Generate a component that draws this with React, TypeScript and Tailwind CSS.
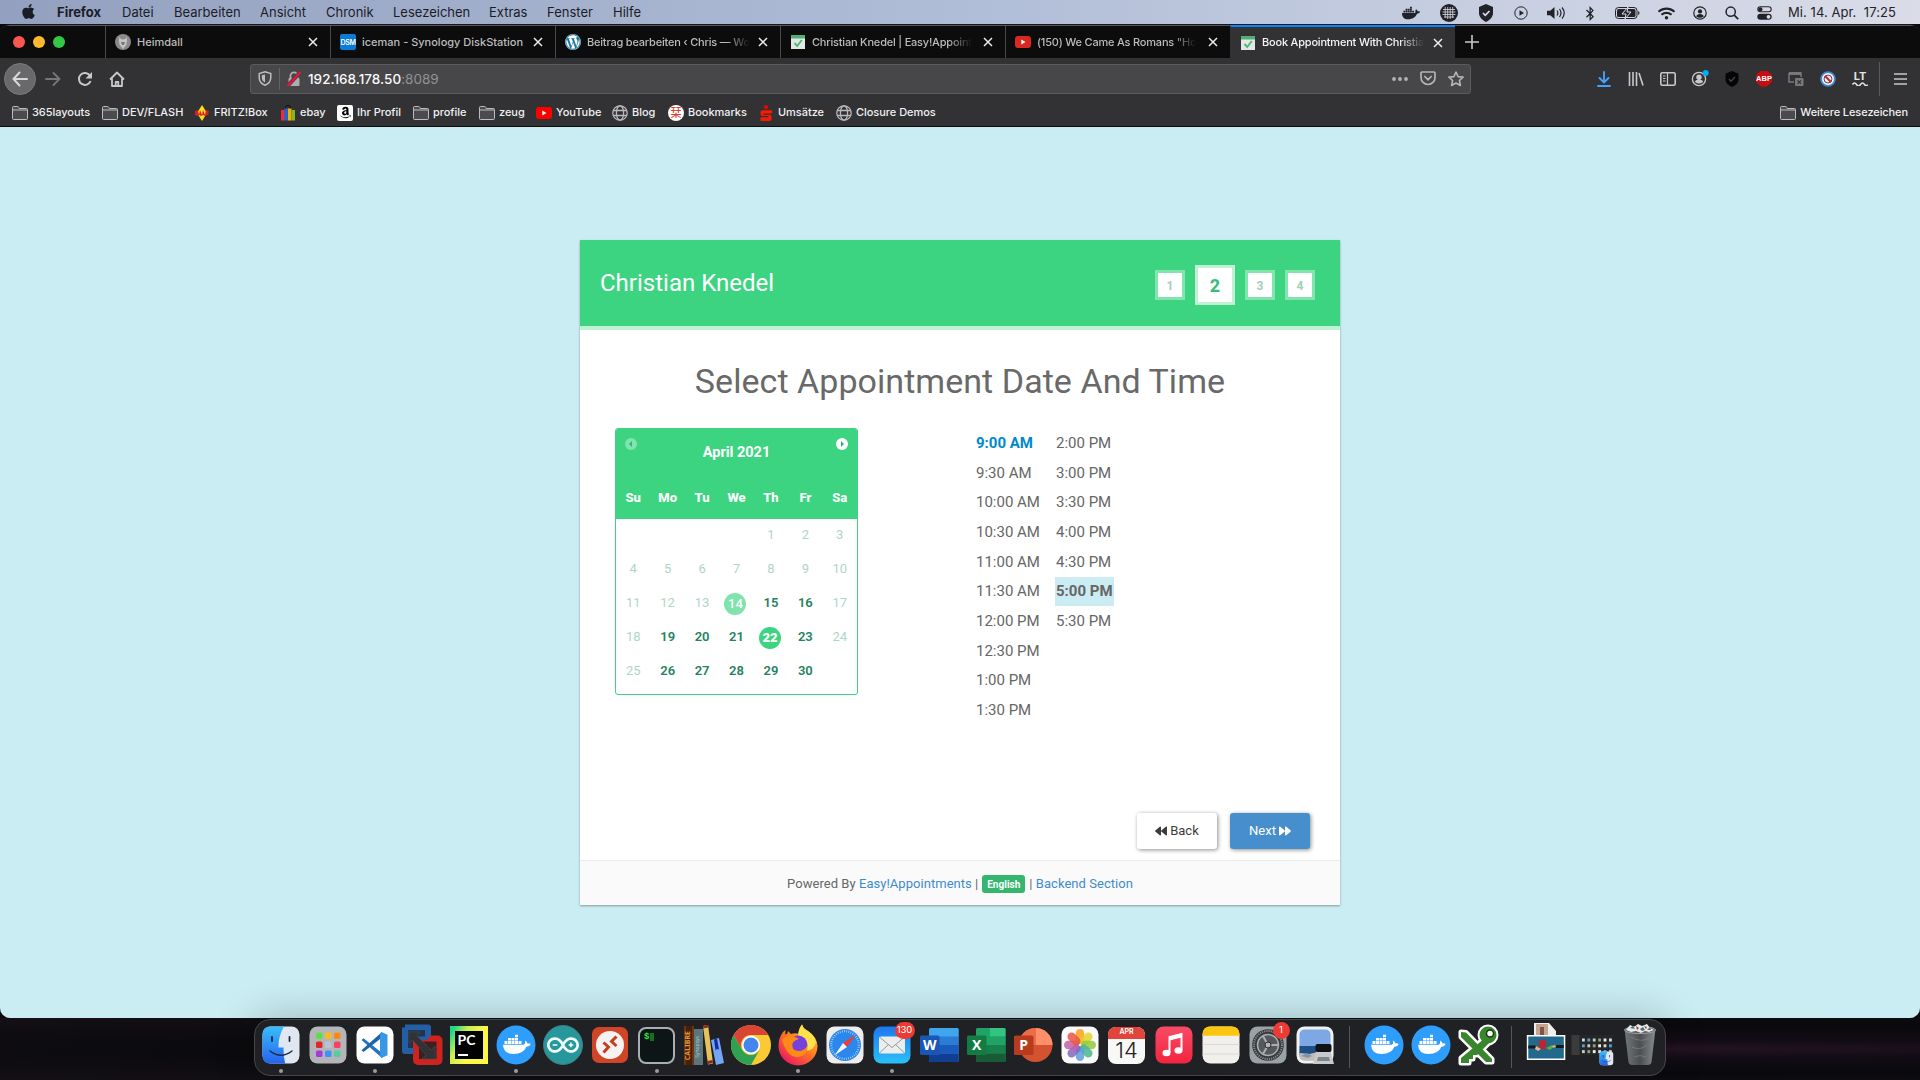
import React from 'react';
import { FaApple, FaDocker, FaBluetoothB, FaWordpress, FaAmazon, FaBackward, FaForward, FaWifi } from 'react-icons/fa';
import { SiArduino } from 'react-icons/si';

/* ---------- macOS menu bar ---------- */

const menus = [
  ['Datei', 'w-[52px]'],
  ['Bearbeiten', 'w-[86px]'],
  ['Ansicht', 'w-[66px]'],
  ['Chronik', 'w-[67px]'],
  ['Lesezeichen', 'w-[96px]'],
  ['Extras', 'w-[58px]'],
  ['Fenster', 'w-[66px]'],
  ['Hilfe', 'w-[60px]'],
];

function MenuBar() {
  return (
    <div className="flex h-6 shrink-0 items-center bg-linear-to-r from-[#93a0bf] via-[#b0bdd7] via-50% to-[#dadde8] pt-[2px] font-['Inter',sans-serif] text-[13px] text-[#1b1d26]">
      <FaApple className="mb-[3px] ml-[20px] h-[17px] w-[17px]" />
      <span className="ml-[20px] w-[65px] text-[13px] font-bold">Firefox</span>
      {menus.map(([label, w]) => (
        <span key={label} className={`${w} shrink-0 whitespace-nowrap`}>{label}</span>
      ))}
      <div className="ml-auto flex items-center text-[#222329]">
        <span className="flex w-[38px] justify-center"><FaDocker className="h-[18px] w-[18px]" /></span>
        <span className="flex w-[37px] justify-center">
          <svg viewBox="0 0 18 18" className="h-[18px] w-[18px]">
            <circle cx="9" cy="9" r="9" fill="currentColor" />
            <path d="M3 5.500h12M2.500 8h13M2.500 10.500h13M4 13h10M5.200 3v11M7.700 3v12M10.200 3v12M12.700 3v11" stroke="#d8d9e6" strokeWidth=".8" />
          </svg>
        </span>
        <span className="flex w-[37px] justify-center">
          <svg viewBox="0 0 16 18" className="h-[18px] w-4">
            <path d="M8 0l7 3v6c0 4-3 7-7 9-4-2-7-5-7-9V3z" fill="currentColor" />
            <path d="M5 9l2.300 2.300L11.500 7" stroke="#dcdde8" strokeWidth="1.700" fill="none" />
          </svg>
        </span>
        <span className="flex w-[34px] justify-center">
          <svg viewBox="0 0 14 14" className="h-3.5 w-3.5">
            <circle cx="7" cy="7" r="6.200" fill="none" stroke="currentColor" strokeWidth="1" />
            <path d="M5.500 4.200v5.600L10 7z" fill="currentColor" />
          </svg>
        </span>
        <span className="flex w-[36px] justify-center">
          <svg viewBox="0 0 19 14" className="h-3.5 w-[19px]">
            <path d="M0 4.800h3.200L7.500 1v12L3.200 9.200H0z" fill="currentColor" />
            <path d="M10 4.500q1.700 2.500 0 5M12.500 3q3 4 0 8M15 1.500q4.500 5.500 0 11" fill="none" stroke="currentColor" strokeWidth="1.200" />
          </svg>
        </span>
        <span className="flex w-[32px] justify-center"><FaBluetoothB className="h-[15px] w-3" /></span>
        <span className="flex w-[42px] justify-center">
          <svg viewBox="0 0 25 12" className="h-3 w-[25px]">
            <rect x=".5" y=".5" width="21.500" height="11" rx="3" fill="none" stroke="currentColor" />
            <rect x="2" y="2" width="18.500" height="8" rx="1.500" fill="currentColor" />
            <path d="M13 0L7 7h4l-1 5 6-7h-4z" fill="currentColor" stroke="#dcdde8" strokeWidth="1" />
            <path d="M23.200 4v4q1.300-.7 1.300-2t-1.300-2z" fill="currentColor" />
          </svg>
        </span>
        <span className="flex w-[36px] justify-center"><FaWifi className="h-[15px] w-[17px]" /></span>
        <span className="flex w-[32px] justify-center">
          <svg viewBox="0 0 14 14" className="h-3.5 w-3.5" fill="currentColor">
            <circle cx="7" cy="7" r="6.200" fill="none" stroke="currentColor" strokeWidth="1.200" />
            <circle cx="7" cy="5.400" r="2.100" />
            <path d="M3.200 10.500q.6-2.500 3.800-2.500t3.800 2.500q-3.800 2.500-7.600 0z" />
          </svg>
        </span>
        <span className="flex w-[32px] justify-center">
          <svg viewBox="0 0 14 14" className="h-3.5 w-3.5" fill="none" stroke="currentColor" strokeWidth="1.500">
            <circle cx="5.700" cy="5.700" r="4.600" />
            <path d="M9.200 9.200l4 4" strokeWidth="1.800" />
          </svg>
        </span>
        <span className="flex w-[32px] justify-center">
          <svg viewBox="0 0 15 14" className="h-3.5 w-[15px]">
            <rect x=".8" y=".8" width="13.400" height="5" rx="2.500" fill="none" stroke="currentColor" strokeWidth="1.100" />
            <circle cx="3.400" cy="3.300" r="2.100" fill="currentColor" />
            <rect x=".3" y="7.800" width="14.400" height="6" rx="3" fill="currentColor" />
            <circle cx="11.500" cy="10.800" r="1.900" fill="#dcdde8" />
          </svg>
        </span>
        <span className="ml-2 w-[132px] whitespace-pre text-[13px] tracking-[0.06px]">{'Mi. 14. Apr.  17:25'}</span>
      </div>
    </div>
  );
}

/* ---------- Tab favicons ---------- */

const Heimdall = () => (
  <svg viewBox="0 0 16 16" className="h-4 w-4">
    <circle cx="8" cy="8" r="8" fill="#8b8b8b" />
    <path d="M5 2.500C3 6 4.500 8 4.500 10.500L8 15l3.500-4.500C11.500 8 13 6 11 2.500q.5 3-3 3t-3-3z" fill="#c4c4c4" />
    <path d="M6 8h4l-1 3H7z" fill="#777" />
  </svg>
);
const Dsm = () => (
  <span className="flex h-4 w-4 items-center justify-center rounded-[2px] bg-[#0a7bd6] font-['Inter',sans-serif] text-[7px] leading-none font-semibold tracking-[-0.3px] text-white">DSM</span>
);
const Wp = () => (
  <span className="flex h-4 w-4 items-center justify-center rounded-full bg-[#21759b] text-white"><FaWordpress className="h-4 w-4" /></span>
);
const Cal = () => (
  <svg viewBox="0 0 14 14" className="mx-px h-3.5 w-3.5">
    <path d="M0 0h14v14H0z" fill="#e3e8e5" />
    <path d="M0 0h14v3.500H0z" fill="#53ae75" />
    <path d="M3.500 8l2.700 3L10.800 5" fill="none" stroke="#4dbb76" strokeWidth="1.900" />
  </svg>
);
const Yt = ({ c }: { c: string }) => (
  <svg viewBox="0 0 16 12" className="h-3 w-4">
    <rect width="16" height="12" rx="3" fill={c} />
    <path d="M6.300 3.600v4.800L10.500 6z" fill="#fff" />
  </svg>
);
const CloseX = () => (
  <svg viewBox="0 0 10 10" className="h-2.5 w-2.5" stroke="#ededed" strokeWidth="1.500">
    <path d="M1 1l8 8M9 1l-8 8" />
  </svg>
);

const tabs = [
  { icon: <Heimdall />, label: 'Heimdall' },
  { icon: <Dsm />, label: 'iceman - Synology DiskStation' },
  { icon: <Wp />, label: 'Beitrag bearbeiten ‹ Chris — Wo', fade: true },
  { icon: <Cal />, label: 'Christian Knedel | Easy!Appoint', fade: true },
  { icon: <Yt c="#d9281f" />, label: '(150) We Came As Romans "Ho', fade: true },
  { icon: <Cal />, label: 'Book Appointment With Christia', fade: true, active: true },
];

function TabBar() {
  return (
    <div className="flex h-[33px] shrink-0 items-stretch border-t border-[#55575c] bg-[#0c0c0d]">
      <div className="flex w-[105px] shrink-0 items-center gap-2 pl-[13px]">
        <span className="h-3 w-3 rounded-full bg-[#fc5650]" />
        <span className="h-3 w-3 rounded-full bg-[#fdb82f]" />
        <span className="h-3 w-3 rounded-full bg-[#33c748]" />
      </div>
      {tabs.map((t, i) => (
        <div
          key={i}
          className={`flex w-[225px] shrink-0 items-center border-l pr-[12px] pl-[9px] ${t.active ? '-mt-px border-t-2 border-l-[#323234] border-t-[#0a84ff] bg-[#323234] text-[#f5f5f6]' : 'border-[#4a4a4c] text-[#bcbcbd]'}`}
        >
          {t.icon}
          <span className={`ml-[6px] font-['Inter',sans-serif] text-[11px] font-medium whitespace-nowrap ${t.fade ? 'tracking-[-0.2px] mask-r-from-85% mask-r-to-100%' : ''}`}>{t.label}</span>
          <span className="ml-auto"><CloseX /></span>
        </div>
      ))}
      <div className="flex w-[34px] items-center justify-center">
        <svg viewBox="0 0 14 14" className="h-3.5 w-3.5" stroke="#c9c9ca" strokeWidth="1.600"><path d="M7 0v14M0 7h14" /></svg>
      </div>
    </div>
  );
}

/* ---------- Navigation toolbar ---------- */

const Cell = ({ children }: { children: React.ReactNode }) => (
  <span className="flex w-8 shrink-0 items-center justify-center">{children}</span>
);

function NavBar() {
  return (
    <div className="flex h-[41px] shrink-0 items-center text-[#c8c8ca]">
      <span className="ml-1 flex h-8 w-8 items-center justify-center rounded-full border border-[#7a7a7c] bg-[#69696b]">
        <svg viewBox="0 0 16 16" className="h-4 w-4" fill="none" stroke="#d8d8d9" strokeWidth="2" strokeLinecap="round"><path d="M15 8H1.500M7.500 1.500L1.500 8l6 6.500" /></svg>
      </span>
      <span className="ml-px flex w-8 justify-center">
        <svg viewBox="0 0 16 16" className="h-4 w-4" fill="none" stroke="#77777a" strokeWidth="1.800" strokeLinecap="round"><path d="M1 8h13.500M8.500 2l6 6-6 6" /></svg>
      </span>
      <Cell>
        <svg viewBox="0 0 16 16" className="h-4 w-4" fill="none" stroke="currentColor" strokeWidth="2"><path d="M13.600 10A6 6 0 1 1 13 4.600" /><path d="M15 1v6.500H8.500z" fill="currentColor" stroke="none" /></svg>
      </Cell>
      <Cell>
        <svg viewBox="0 0 16 16" className="h-4 w-4" fill="none" stroke="currentColor" strokeWidth="1.800" strokeLinejoin="round"><path d="M1 8.500L8 1.500l7 7M3 7.500V15h10V7.500M6.700 15v-4h2.600v4" /></svg>
      </Cell>
      <div className="ml-[117px] flex h-[30px] w-[1221px] shrink-0 items-center rounded-[3px] border border-[#5b5b5d] bg-[#474749]">
        <svg viewBox="0 0 14 15" className="ml-[7px] h-[15px] w-3.5">
          <path d="M7 .8l5.800 1.700v4C12.800 10 11 12.700 7 14.200 3 12.700 1.200 10 1.200 6.500v-4z" fill="none" stroke="#bcbcbd" strokeWidth="1.500" />
          <path d="M7 3.500v8C4.800 10.500 3.800 8.500 3.800 6.500V4.300z" fill="#bcbcbd" />
        </svg>
        <span className="ml-[7px] h-[22px] w-px bg-[#636365]" />
        <svg viewBox="0 0 16 16" className="ml-[6px] h-4 w-4">
          <path d="M4.500 7V4.800a3.500 3.500 0 0 1 7 0V7" fill="none" stroke="#aeaeb0" strokeWidth="1.800" />
          <rect x="2.500" y="7" width="11" height="8" rx="1" fill="#aeaeb0" />
          <path d="M1.500 15L14.500 1" stroke="#474749" strokeWidth="4" />
          <path d="M1.500 15L14.500 1" stroke="#f5103c" strokeWidth="1.900" />
        </svg>
        <span className="ml-[6px] pt-px font-['Inter',sans-serif] text-[13.500px] tracking-[0.02px] text-[#929294]"><span className="font-medium text-[#f9f9fa]">192.168.178.50</span>:8089</span>
        <div className="ml-auto flex items-center text-[#b4b4b6]">
          <svg viewBox="0 0 16 4" className="mr-3 h-1 w-4" fill="currentColor"><circle cx="2" cy="2" r="1.900" /><circle cx="8" cy="2" r="1.900" /><circle cx="14" cy="2" r="1.900" /></svg>
          <svg viewBox="0 0 16 15" className="mr-3 h-[15px] w-4" fill="none" stroke="currentColor" strokeWidth="1.700" strokeLinecap="round"><path d="M2 1h12q1 0 1 1v4.500a7 7 0 0 1-14 0V2q0-1 1-1z" /><path d="M4.800 5.500L8 8.700l3.200-3.200" /></svg>
          <svg viewBox="0 0 16 16" className="mr-[6px] h-4 w-4" fill="none" stroke="currentColor" strokeWidth="1.600" strokeLinejoin="round"><path d="M8 1l2.100 4.600 5 .5-3.700 3.400 1 5L8 12l-4.400 2.500 1-5L.9 6.100l5-.5z" /></svg>
        </div>
      </div>
      <div className="ml-auto flex items-center">
        <Cell><svg viewBox="0 0 14 16" className="h-4 w-3.5" fill="none" stroke="#45a1ff" strokeWidth="1.900" strokeLinecap="round"><path d="M7 1v10M2.500 7L7 11.500 11.500 7M1 15h12" /></svg></Cell>
        <Cell><svg viewBox="0 0 16 14" className="h-3.5 w-4" fill="none" stroke="currentColor" strokeWidth="1.600"><path d="M1.500 0v14M5 0v14M8.500 0v14M11 1l4 12.500" /></svg></Cell>
        <Cell><svg viewBox="0 0 16 14" className="h-3.5 w-4" fill="none" stroke="currentColor" strokeWidth="1.600"><rect x=".8" y=".8" width="14.400" height="12.400" rx="1.500" /><path d="M7.500 1v12M3 4h2.500M3 6.500h2.500M3 9h2.500" strokeWidth="1.200" /></svg></Cell>
        <Cell>
          <svg viewBox="0 0 18 17" className="h-[17px] w-[18px]"><circle cx="8" cy="9" r="6.600" fill="none" stroke="currentColor" strokeWidth="1.300" /><circle cx="8" cy="7.300" r="2.700" fill="currentColor" /><path d="M4 12q0-2.500 4-2.500t4 2.500q-4 3-8 0z" fill="currentColor" /><circle cx="14.700" cy="3" r="3" fill="#00aef5" /></svg>
        </Cell>
        <Cell><svg viewBox="0 0 14 16" className="h-4 w-3.5"><path d="M7 0l6.500 2.800v5.500C13.500 12 10.500 14.500 7 16 3.500 14.500.5 12 .5 8.300V2.800z" fill="#050505" /><path d="M4 8l2 2.200L10 6" fill="none" stroke="#444446" strokeWidth="1.400" /></svg></Cell>
        <Cell>
          <span className="flex h-4 w-4 items-center justify-center bg-[#c70d12] font-['Liberation_Sans',sans-serif] text-[7.500px] leading-none font-bold text-white [clip-path:polygon(30%_0,70%_0,100%_30%,100%_70%,70%_100%,30%_100%,0_70%,0_30%)]">ABP</span>
        </Cell>
        <Cell><svg viewBox="0 0 16 14" className="h-3.5 w-4"><path d="M1 1h12v4M1 1v9h5" fill="none" stroke="#78787a" strokeWidth="1.500" /><path d="M1 0h12v3H1z" fill="#78787a" /><rect x="7" y="6" width="8.500" height="8" rx="1" fill="#78787a" /><path d="M9.500 8.300l3.500 3.500M13 8.300l-3.500 3.500" stroke="#323234" strokeWidth="1.200" /></svg></Cell>
        <Cell><svg viewBox="0 0 16 16" className="h-4 w-4"><circle cx="8" cy="8" r="6.900" fill="#f4f6fa" stroke="#3d87d8" strokeWidth="1.800" /><circle cx="8" cy="8" r="4" fill="#e6ebf5" stroke="#8c3444" strokeWidth="1" /><path d="M5 5l6 6" stroke="#b32a31" strokeWidth="1.800" /></svg></Cell>
        <Cell>
          <span className="flex flex-col items-center font-['Inter',sans-serif] text-[11px] leading-[11px] font-bold text-[#e2e2e3]">
            LT
            <svg viewBox="0 0 16 4" className="h-1 w-4" fill="none" stroke="currentColor" strokeWidth="1.600"><path d="M.5 2.500q2-3 4 0t4 0 4 0 3 0" /></svg>
          </span>
        </Cell>
        <span className="ml-[3px] h-[34px] w-px bg-[#5a5a5c]" />
        <svg viewBox="0 0 13 12" className="mr-[13px] ml-[14px] h-3 w-[13px]" stroke="currentColor" strokeWidth="1.700"><path d="M0 1h13M0 6h13M0 11h13" /></svg>
      </div>
    </div>
  );
}

/* ---------- Bookmark bar ---------- */

const Folder = () => (
  <svg viewBox="0 0 16 14" className="h-3.5 w-4" fill="#4b4b4d" stroke="#bdbdbe" strokeWidth="1"><path d="M.5 12V1.500q0-1 1-1h4q1 0 1.300 1l.4 1h7.300q1 0 1 1V12.500q0 1-1 1h-13q-1 0-1-1zM.5 4h15" /></svg>
);
const Globe = () => (
  <svg viewBox="0 0 16 16" className="h-4 w-4" fill="none" stroke="#b9b9bb" strokeWidth="1.300"><circle cx="8" cy="8" r="7.200" /><ellipse cx="8" cy="8" rx="3.600" ry="7.200" /><path d="M1.500 5.500h13M1.500 10.500h13" /></svg>
);

const bookmarks = [
  { icon: <Folder />, label: '365layouts', w: 'w-[90px]' },
  { icon: <Folder />, label: 'DEV/FLASH', w: 'w-[92px]' },
  {
    icon: <svg viewBox="0 0 16 16" className="h-4 w-4"><path d="M8 0l5 8-5 8-5-8z" fill="#ffdf1a" /><path d="M1 6l3-1 1 5 1-5 2 5 1-5 2 5 1-5 3 1-1 4-3 1-2-1-2 1-2-1-2 1-2-1z" fill="#d5202a" /></svg>,
    label: 'FRITZ!Box', w: 'w-[86px]',
  },
  {
    icon: <svg viewBox="0 0 16 16" className="h-4 w-4"><path d="M5.500 4V2.500a2.500 2 0 0 1 5 0V4" fill="none" stroke="#111" /><path d="M1 5h4v10.500H1z" fill="#e43137" /><path d="M4.500 3.500H8v12H4.500z" fill="#1c65d3" /><path d="M8 3.500h3.500v12H8z" fill="#f4ae02" /><path d="M11.500 5H15v10.500h-3.500z" fill="#86b817" /></svg>,
    label: 'ebay', w: 'w-[57px]',
  },
  { icon: <span className="flex h-4 w-4 items-center justify-center rounded-[2px] bg-white text-black"><FaAmazon className="h-[13px] w-[13px]" /></span>, label: 'Ihr Profil', w: 'w-[76px]' },
  { icon: <Folder />, label: 'profile', w: 'w-[66px]' },
  { icon: <Folder />, label: 'zeug', w: 'w-[57px]' },
  { icon: <Yt c="#ff0000" />, label: 'YouTube', w: 'w-[76px]' },
  { icon: <Globe />, label: 'Blog', w: 'w-[56px]' },
  { icon: <span className="flex h-4 w-4 items-center justify-center rounded-full bg-white font-['Noto_Sans_CJK_JP',sans-serif] text-[11px] leading-none text-[#d8432f]">栞</span>, label: 'Bookmarks', w: 'w-[90px]' },
  {
    icon: <svg viewBox="0 0 16 16" className="h-4 w-4"><circle cx="8" cy="2" r="2" fill="#f00" /><path d="M14 5.200H4.500q-2 0-2 2v2q0 1.800 2 1.800h6v1.200H2.500V16h9q2 0 2-2v-2.300q0-2-2-2h-6V8.400H14z" fill="#fa1a00" /></svg>,
    label: 'Umsätze', w: 'w-[78px]',
  },
  { icon: <Globe />, label: 'Closure Demos', w: 'w-[110px]' },
];

function BookmarkBar() {
  return (
    <div className="flex h-7 shrink-0 items-center border-b border-[#0c0c0d] pl-3 font-['Inter',sans-serif] text-[11px] font-medium tracking-[-0.04px] text-[#f0f0f1]">
      {bookmarks.map((b) => (
        <span key={b.label} className={`${b.w} flex shrink-0 items-center gap-1 whitespace-nowrap`}>{b.icon}{b.label}</span>
      ))}
      <span className="mr-3 ml-auto flex items-center gap-1 tracking-[-0.09px] whitespace-nowrap"><Folder />Weitere Lesezeichen</span>
    </div>
  );
}

/* ---------- Booking page ---------- */

const Step = ({ n }: { n: number }) => (
  <span className="flex h-[30px] w-[30px] items-center justify-center border-[3px] border-[#81e5ad] bg-white pt-px text-[12px] font-bold text-[#9fcfb9]">{n}</span>
);

const enabledDays = [15, 16, 19, 20, 21, 23, 26, 27, 28, 29, 30];
const cells: (number | null)[] = [null, null, null, null, ...Array.from({ length: 30 }, (_, i) => i + 1)];

function Day({ d }: { d: number | null }) {
  if (d === 14 || d === 22) {
    return (
      <span className="flex h-[34px] items-center justify-center pt-[2px] pr-[2px]">
        <span className={`flex h-[22px] w-[22px] items-center justify-center rounded-full text-white ${d === 14 ? 'bg-[#7fe3ac] font-medium' : 'bg-[#3dd481] font-black'}`}>{d}</span>
      </span>
    );
  }
  const on = d !== null && enabledDays.includes(d);
  return <span className={`flex h-[34px] items-center justify-center ${on ? 'font-semibold text-[#258263]' : 'font-[450] text-[#aed6c5]'}`}>{d}</span>;
}

function Calendar() {
  return (
    <div className="h-[267px] w-[243px] overflow-hidden rounded-[3px] border border-[#3dd481] bg-white">
      <div className="h-[90px] bg-[#3dd481] text-white">
        <div className="flex h-[49px] items-start justify-between px-[9px] pt-[9px]">
          <svg viewBox="0 0 12 12" className="h-3 w-3 opacity-35"><circle cx="6" cy="6" r="6" fill="#fff" /><path d="M7 3v6L4 6z" fill="#188a4c" /></svg>
          <span className="mt-[5px] text-[14.500px] leading-5 font-bold">April 2021</span>
          <svg viewBox="0 0 12 12" className="h-3 w-3"><circle cx="6" cy="6" r="6" fill="#fff" /><path d="M5 3v6l3-3z" fill="#2cb36c" /></svg>
        </div>
        <div className="grid h-10 grid-cols-7 items-center text-center text-[13px] font-extrabold">
          {['Su', 'Mo', 'Tu', 'We', 'Th', 'Fr', 'Sa'].map((d) => <span key={d}>{d}</span>)}
        </div>
      </div>
      <div className="-mt-px grid grid-cols-7 text-[13px]">
        {cells.map((d, i) => <Day key={i} d={d} />)}
      </div>
    </div>
  );
}

const hoursA = ['9:00 AM', '9:30 AM', '10:00 AM', '10:30 AM', '11:00 AM', '11:30 AM', '12:00 PM', '12:30 PM', '1:00 PM', '1:30 PM'];
const hoursB = ['2:00 PM', '3:00 PM', '3:30 PM', '4:00 PM', '4:30 PM', '5:00 PM', '5:30 PM'];

const Hour = ({ t }: { t: string }) => (
  <span className={`flex h-[29.66px] items-center px-px whitespace-nowrap ${t === '9:00 AM' ? 'font-bold text-[#0088cc]' : t === '5:00 PM' ? 'bg-[#caecf2] font-bold' : ''}`}>{t}</span>
);

function Booking() {
  return (
    <div className="flex h-[665px] w-[760px] flex-col bg-white font-['Roboto',sans-serif] text-[#666] shadow-[0_1px_2px_rgba(0,0,0,0.35)]">
      <div className="flex h-[90px] shrink-0 items-center justify-between border-b-4 border-[#c1f1d5] bg-[#3dd481] pr-[25px] pl-5">
        <span className="text-[24px] font-[450] text-white">Christian Knedel</span>
        <div className="mt-1 flex items-center gap-[10px]">
          <Step n={1} />
          <span className="flex h-10 w-10 items-center justify-center border-[3px] border-[#c1f1d5] bg-white text-[18px] font-extrabold text-[#3dbd7b]">2</span>
          <Step n={3} />
          <Step n={4} />
        </div>
      </div>
      <h2 className="mt-[30px] text-center text-[34px] leading-[42px] font-[430] tracking-[0.05px] text-[#696969]">Select Appointment Date And Time</h2>
      <div className="mt-[26px] flex pl-[35px]">
        <Calendar />
        <div className="ml-[117px] flex items-start gap-[14px] pt-[0.5px] text-[15px] font-[450]">
          <div className="flex w-[66px] flex-col">{hoursA.map((t) => <Hour key={t} t={t} />)}</div>
          <div className="flex w-[59px] flex-col">{hoursB.map((t) => <Hour key={t} t={t} />)}</div>
        </div>
      </div>
      <div className="mt-auto flex justify-end gap-[13px] pr-[30px] pb-[11px] text-[13px] font-[450]">
        <span className="flex h-9 w-20 items-center justify-center gap-[3px] rounded-[3px] bg-white text-[#3c3c3c] shadow-[1px_1px_4px_rgba(0,0,0,0.45)]"><FaBackward className="h-3 w-3" />Back</span>
        <span className="flex h-9 w-20 items-center justify-center gap-[3px] rounded-[3px] bg-[#478fcc] text-white shadow-[1px_1px_4px_rgba(0,0,0,0.45)]">Next<FaForward className="h-3 w-3" /></span>
      </div>
      <div className="flex h-[45px] shrink-0 items-center justify-center gap-1 border-t border-[#eaeaea] bg-[#fafafa] pt-px text-[13px] font-[450] tracking-[0.04px]">
        <span>Powered By <span className="text-[#428bca]">Easy!Appointments</span> |</span>
        <span className="flex h-[18px] w-[43px] items-center justify-center rounded-[3px] bg-[#35b66f] pt-px text-[10px] font-bold text-white">English</span>
        <span>| <span className="text-[#428bca]">Backend Section</span></span>
      </div>
    </div>
  );
}

/* ---------- Dock icons ---------- */

const Ico = ({ children }: { children: React.ReactNode }) => (
  <svg viewBox="0 0 40 40" className="h-10 w-10 overflow-visible">{children}</svg>
);

const FinderFace = () => (
  <>
    <rect x="1.500" y="1.500" width="37" height="37" rx="8" fill="#e1e7f1" />
    <path d="M9.500 1.500H23Q17 12 17.500 22.500h5q-.3 8 1.700 16H9.500q-8 0-8-8v-21q0-8 8-8z" fill="url(#finder)" />
    <path d="M11 12v4M28.500 12v4" stroke="#1b2b45" strokeWidth="1.800" strokeLinecap="round" />
    <path d="M9 26q11 8.500 22 0" fill="none" stroke="#1b2b45" strokeWidth="1.400" strokeLinecap="round" />
  </>
);
const Finder = () => <Ico><FinderFace /></Ico>;

const pad = ['#5ae04b', '#fdbb1a', '#ff8a13', '#df2929', '#b4c4d0', '#fb3e62', '#a43bdc', '#3b93fb', '#55cda0'];
const Launchpad = () => (
  <Ico>
    <rect x="1.500" y="1.500" width="37" height="37" rx="8" fill="#b4b5b8" />
    {pad.map((c, i) => <rect key={c} x={8 + (i % 3) * 9} y={7.500 + Math.floor(i / 3) * 9} width="6.500" height="6.500" rx="1.600" fill={c} />)}
  </Ico>
);
const VsCode = () => (
  <Ico>
    <rect x="1.500" y="1.500" width="37" height="37" rx="8" fill="#fff" />
    <path d="M6.500 15l2-1.800L27 28v5z" fill="#2274c0" />
    <path d="M6.500 25.200l2 1.800L27 12.500V7z" fill="#1a66ae" />
    <path d="M26.500 7l6 2.800v20.400l-6 2.800q-1.500-1-1.500-3V10q0-2 1.500-3z" fill="#3a97e3" />
  </Ico>
);
const VmWare = () => (
  <Ico>
    <rect x="14" y="13.500" width="23.500" height="23.500" rx="2" fill="#3a2022" stroke="#cf2320" strokeWidth="6" />
    <path d="M3 2.500h23v9M26 12h-9M3 2.500V26h8.500" fill="none" stroke="#245fa5" strokeWidth="6" strokeLinejoin="round" />
    <path d="M6 5.500h17v6H14q-3 0-3 3V23H6z" fill="#1d3552" />
    <path d="M7 7h11l-3.500 3.500L29 25l4-4v13H20l4-4L10.500 15 7 18.500z" fill="#303236" stroke="#4c4e52" strokeWidth=".6" />
  </Ico>
);
const PyCharm = () => (
  <div className="flex h-[38px] w-[38px] items-center justify-center bg-[linear-gradient(120deg,#21d789_8%,#c9ee50_32%,#fcf84a_60%)]">
    <div className="flex h-7 w-7 flex-col justify-between bg-black px-[3px] pt-[2px] pb-[3px] font-['Lato',sans-serif] text-[14px] leading-[14px] font-bold text-white">
      PC
      <span className="h-[2px] w-[10px] bg-white" />
    </div>
  </div>
);
const Docker = () => (
  <Ico>
    <circle cx="20" cy="20" r="19.500" fill="#2f9dfb" />
    <path d="M7 19.800h21q1.800-1.500 1-4.300 2 .8 2.600 3 1.700-.5 3 .5-1 2.800-4.200 2.800Q27.500 29 17.500 29 7.500 29 7 19.800z" fill="#fff" />
    <path d="M8.500 16h3v3h-3zM12 16h3v3h-3zM15.500 16h3v3h-3zM19 16h3v3h-3zM22.500 16h3v3h-3zM12 13h3v2.500h-3zM15.500 13h3v2.500h-3zM19 13h3v2.500h-3zM19 9.800h3v2.500h-3z" fill="#fff" />
  </Ico>
);
const Arduino = () => (
  <span className="flex h-10 w-10 items-center justify-center rounded-full border border-[#3c7c80] bg-[#27979c] text-[#f2fbfb]"><SiArduino className="h-[32px] w-[32px]" /></span>
);
const Rdp = () => (
  <Ico>
    <rect x="2" y="2" width="36" height="36" rx="7" fill="#d04525" />
    <circle cx="20" cy="20" r="14" fill="#f5f2f1" />
    <path d="M13.500 17.500l5 4.500-5 5.500M26.500 11.500L21.500 16.500l5 4.500" fill="none" stroke="#c43d20" strokeWidth="3" />
  </Ico>
);
const Terminal = () => (
  <div className="h-[37px] w-[37px] rounded-[8px] border-2 border-[#a9b0b3] bg-[#0d1516] pt-[2px] pl-[4px] font-['Liberation_Mono',monospace] text-[9px] leading-3 font-bold text-[#2ee63c]">
    <span className="flex items-center gap-px">$<span className="h-2 w-1 bg-[#16701f]" /></span>
  </div>
);
const Calibre = () => (
  <div className="flex h-10 w-10 items-end">
    <span className="flex h-[39px] w-[10px] shrink-0 items-center justify-center border-y-2 border-[#6b3512] bg-[#472107] text-[7px] font-bold text-[#e4943a] [writing-mode:sideways-lr]">CALIBRE</span>
    <span className="flex h-[36px] w-[9px] shrink-0 items-center justify-center bg-[#59777c] text-[5px] text-[#b6c9cb] [writing-mode:sideways-lr]">Synopsys</span>
    <svg viewBox="0 0 22 40" className="h-10 w-[22px] shrink-0">
      <path d="M0 1l5-1.500 5 39-5 1z" fill="#e6c25d" /><path d="M0 1l5-1.500.3 3-5 1zM4.500 36l5-1 .4 3-5 1z" fill="#8b2a23" />
      <path d="M8 15l8-2 5 25-8 2z" fill="#74a5f7" /><path d="M11 14.500l3-.7 2 11-2-1-1.400 1.700z" fill="#1629a0" />
    </svg>
  </div>
);
const Chrome = () => (
  <Ico>
    <circle cx="20" cy="20" r="20" fill="#fbc934" />
    <path d="M2.700 10A20 20 0 0 0 20 40l8.600-15a10 10 0 0 1-17.300 0z" fill="#2fa152" />
    <path d="M2.700 10A20 20 0 0 1 37.300 10H20a10 10 0 0 0-8.700 15z" fill="#d94435" />
    <circle cx="20" cy="20" r="9.200" fill="#fff" /><circle cx="20" cy="20" r="7.500" fill="#4585ee" />
  </Ico>
);
const Firefox = () => (
  <Ico>
    <path d="M24-.5q1.500 4.500 6 6.500 9 6 9.500 15A19.500 19.500 0 0 1 .5 21Q.5 13 5 7l2.500-2-.3 4.500 2-.8L10 6l3 3q4-1.500 8 0 .5-5.500 3-9.500z" fill="url(#fox)" />
    <path d="M24-.5q1.500 4.500 6 6.500 7 5 8 11-2 8-9 9l-3-13-6-3q.5-6.500 4-10.500z" fill="#ffe14a" />
    <circle cx="20" cy="20" r="9.500" fill="#7540dc" />
    <path d="M4 14q8-6 17 0-5 1-6.500 4.500Q13 25 20 26q7 0 9.500-6 1 10-9.500 12Q8 32 4 14z" fill="#ff8b16" />
  </Ico>
);
const Safari = () => (
  <Ico>
    <rect x="1.500" y="1.500" width="37" height="37" rx="8" fill="#ededee" />
    <circle cx="20" cy="20" r="16" fill="#2b87ec" />
    <circle cx="20" cy="20" r="13.800" fill="none" stroke="#b9dcfa" strokeWidth="2.200" strokeDasharray=".7 1.500" />
    <path d="M31 9.500L18 18l4 4z" fill="#f23b35" /><path d="M9.500 30.500L18 18l4 4z" fill="#f5f5f7" />
  </Ico>
);
const Badge = ({ n, cls }: { n: string; cls: string }) => (
  <span className={`absolute -top-[3px] flex h-[17px] items-center justify-center rounded-full bg-[#ec3a35] font-['Inter',sans-serif] text-[9.500px] text-white ${cls}`}>{n}</span>
);
const Mail = () => (
  <div className="relative">
    <Ico>
      <rect x="1.500" y="1.500" width="37" height="37" rx="8" fill="url(#mail)" />
      <rect x="7" y="11.500" width="26" height="17" rx="2" fill="#eceeee" />
      <path d="M8 12.500l12 10 12-10M8 27.500l8.500-8M32 27.500l-8.500-8" fill="none" stroke="#92989d" strokeWidth="1" />
    </Ico>
    <Badge n="130" cls="left-[23px] w-[20px]" />
  </div>
);
const Office = ({ l, c }: { l: string; c: string[] }) => (
  <Ico>
    <rect x="10" y="3" width="29.500" height="34" rx="1.500" fill={c[0]} />
    <path d="M24 3h14q1.500 0 1.500 1.500V11.500H24z" fill={c[1]} /><path d="M10 11.500h29.500V20H10z" fill={c[2]} />
    <path d="M10 20h29.500v8.500H10z" fill={c[3]} /><path d="M10 28.500h29.500v7q0 1.500-1.500 1.500H11.500Q10 37 10 35.500z" fill={c[4]} />
    <rect x="1" y="10.500" width="19.500" height="19.500" rx="1.500" fill={c[5]} />
    <text x="10.700" y="25.300" textAnchor="middle" fontSize="14" fontWeight="700" fontFamily="Open Sans, sans-serif" fill="#fff">{l}</text>
  </Ico>
);
const PowerPoint = () => (
  <Ico>
    <circle cx="22.500" cy="20" r="17" fill="#d35230" /><path d="M22.500 3v17h17a17 17 0 0 0-17-17z" fill="#ff8f6b" /><path d="M22.500 3a17 17 0 0 0-17 17h17z" fill="#ec6c47" />
    <rect x="1" y="10.500" width="19.500" height="19.500" rx="1.500" fill="#b83b1d" />
    <text x="10.700" y="25.300" textAnchor="middle" fontSize="14" fontWeight="700" fontFamily="Open Sans, sans-serif" fill="#fff">P</text>
  </Ico>
);
const petals = ['#f9a11b', '#e3d32b', '#93c83d', '#49b88c', '#5d9ed8', '#8767bd', '#c660a5', '#ee5446'];
const Photos = () => (
  <Ico>
    <rect x="1.500" y="1.500" width="37" height="37" rx="8" fill="#fafafa" />
    {petals.map((c, i) => <rect key={c} x="15.800" y="4" width="8.400" height="15" rx="4.200" fill={c} opacity=".86" transform={`rotate(${i * 45} 20 20)`} />)}
  </Ico>
);
const CalendarApp = () => (
  <div className="flex h-[37px] w-[37px] flex-col items-center overflow-hidden rounded-[8px] bg-[#f8f8f6] font-['Inter',sans-serif]">
    <span className="flex h-3 w-full items-center justify-center bg-[#e2443b] text-[7px] font-semibold text-white">APR</span>
    <span className="text-[22px] leading-[23px] font-light text-[#222]">14</span>
  </div>
);
const Music = () => (
  <Ico>
    <rect x="1.500" y="1.500" width="37" height="37" rx="8" fill="url(#music)" />
    <path d="M15.500 27.500V12l12-3v16" fill="none" stroke="#fff" strokeWidth="2" /><path d="M15.500 12l12-3v3.500l-12 3z" fill="#fff" />
    <ellipse cx="12.500" cy="28" rx="4" ry="3.200" fill="#fff" /><ellipse cx="24.500" cy="25.500" rx="4" ry="3.200" fill="#fff" />
  </Ico>
);
const Notes = () => (
  <Ico>
    <rect x="1.500" y="1.500" width="37" height="37" rx="8" fill="#f1f0ed" />
    <path d="M9.500 1.500h21q8 0 8 8v1.300h-37V9.500q0-8 8-8z" fill="#fcc60f" />
    <path d="M1.500 19.500h37M1.500 29h37" stroke="#d3d2cf" strokeWidth=".8" />
  </Ico>
);
const Settings = () => (
  <div className="relative">
    <Ico>
      <rect x="1.500" y="1.500" width="37" height="37" rx="8" fill="#9aa2a6" />
      <circle cx="20" cy="20" r="15.800" fill="#37393b" /><circle cx="20" cy="20" r="14" fill="none" stroke="#858a8d" strokeWidth="2" strokeDasharray="1.200 1" />
      <circle cx="20" cy="20" r="10.500" fill="#55595b" stroke="#aaaeb0" strokeWidth="1.500" />
      <path d="M20 20l-5-9M20 20h10.500M20 20l-5 9" stroke="#aaaeb0" strokeWidth="2" /><circle cx="20" cy="20" r="3" fill="#b0b4b6" stroke="#2a2c2e" />
    </Ico>
    <Badge n="1" cls="left-[25px] w-[17px]" />
  </div>
);
const Preview = () => (
  <Ico>
    <rect x="1.500" y="1.500" width="37" height="37" rx="8" fill="#eef0f2" />
    <rect x="4.500" y="4.500" width="31" height="31" rx="5" fill="#7ea8e4" /><path d="M4.500 21h31v9h-31z" fill="#204e87" />
    <path d="M4.500 28l10 1 8-2v8.500h-13q-5 0-5-5z" fill="#c5bdb3" /><path d="M6 31l6-3 5 3-4 2z" fill="#7c98ae" />
    <path d="M22 24h13l4 15H18z" fill="#c6cacd" /><rect x="20.500" y="19" width="16" height="8" rx="2" fill="#111214" />
    <path d="M23 32h11l1 4H22z" fill="#7f858a" />
  </Ico>
);
const KeePass = () => (
  <Ico>
    <g stroke="#fff" strokeWidth="5" strokeLinejoin="round" fill="#fff"><path d="M3 7l5 .5L34 34v3h-6L3 12z" /><path d="M27 13L3 33v5h8v-4h4v-4h4L31 18z" /><circle cx="30" cy="10" r="8" /></g>
    <g fill="#39862e"><path d="M3 7l5 .5L34 34v3h-6L3 12z" /><path d="M27 13L3 33v5h8v-4h4v-4h4L31 18z" /><circle cx="30" cy="10" r="8.500" /></g>
    <circle cx="32" cy="8.500" r="3.500" fill="#fff" stroke="#1a3b16" strokeWidth="1.500" />
  </Ico>
);
const Pictures = () => (
  <Ico>
    <path d="M8-2h15l7 8v9H8z" fill="#eee" /><path d="M10-1h12v11H10z" fill="#c4a58e" /><path d="M14 2h4v9h-4z" fill="#7e5641" />
    <rect x=".8" y="10" width="38.500" height="25" fill="#fff" /><rect x="2.300" y="11.500" width="35.500" height="22" fill="#21698d" />
    <path d="M2.300 20.500h7l2.500 3H2.300zM37.800 20h-7l-2.500 3h9.500z" fill="#17191e" /><rect x="13" y="15" width="7" height="9" rx="1.500" fill="#bd2530" /><path d="M20 23l6-3 2 2-4 3z" fill="#62ac35" /><path d="M10 21l5 3-3 2-3-2zM26 21l3-1 1 2.500h-3z" fill="#e8b38f" />
  </Ico>
);
const Minimized = () => (
  <Ico>
    <rect x="-1.500" y="10" width="42" height="20" fill="#242628" /><rect x="-1.500" y="10" width="8" height="20" fill="#3a3b3d" />
    {Array.from({ length: 18 }, (_, i) => <rect key={i} x={9 + (i % 6) * 5.400} y={13.500 + Math.floor(i / 6) * 5.800} width="2.800" height="3" fill={['#d9d9d9', '#5a9ecd', '#c8cac6', '#8aa76d', '#eee'][i % 5]} />)}
    <g transform="translate(26 26) scale(.37)"><FinderFace /></g>
  </Ico>
);
const Trash = () => (
  <Ico>
    <path d="M4.500 4h31l-4 33q-.5 3-4 3h-15q-3.500 0-4-3z" fill="url(#bin)" />
    <ellipse cx="20" cy="5" rx="15.500" ry="3.500" fill="#55595c" stroke="#a0a4a7" />
    <path d="M6 5l4-5 4 2 4-3 4 2 5-2 3 4 4 2-5 2-4-1-4 2-5-2-5 1z" fill="#e9e9e8" /><path d="M10 3l3-2 2 3zM20 4l3-2 2 3-3 1zM27 5l3-3 1 3z" fill="#4b6f79" /><path d="M16 1l3 2-2 2zM24 1l3 1-1 2z" fill="#8a4634" />
    <path d="M11 12q10 6 18 1M12 22q8 4 15-2M14 32q6-3 12 0" stroke="#a5aaad" strokeWidth="1" fill="none" opacity=".35" />
  </Ico>
);

const apps: { el: React.ReactNode; dot?: boolean }[] = [
  { el: <Finder />, dot: true }, { el: <Launchpad /> }, { el: <VsCode />, dot: true }, { el: <VmWare /> }, { el: <PyCharm /> },
  { el: <Docker />, dot: true }, { el: <Arduino /> }, { el: <Rdp /> }, { el: <Terminal />, dot: true }, { el: <Calibre /> }, { el: <Chrome /> },
  { el: <Firefox />, dot: true }, { el: <Safari /> }, { el: <Mail />, dot: true },
  { el: <Office l="W" c={['#41a5ee', '#41a5ee', '#2b7cd3', '#185abd', '#103f91', '#1a56b5']} /> },
  { el: <Office l="X" c={['#21a366', '#33c481', '#21a366', '#18804a', '#185c37', '#137c43']} /> },
  { el: <PowerPoint /> }, { el: <Photos /> }, { el: <CalendarApp /> }, { el: <Music /> }, { el: <Notes /> }, { el: <Settings /> }, { el: <Preview /> },
];

const DockItem = ({ children, dot }: { children: React.ReactNode; dot?: boolean }) => (
  <div className="flex h-full w-[47px] shrink-0 flex-col items-center pt-[5px]">
    <div className="flex h-10 w-10 items-center justify-center">{children}</div>
    {dot && <span className="mt-1 h-1 w-1 rounded-full bg-[#9c9ca0]" />}
  </div>
);
const Divider = () => <span className="mt-[6px] h-[42px] w-px shrink-0 bg-[#55555a]" />;

function Dock() {
  return (
    <div className="flex h-[62px] shrink-0 justify-center bg-[radial-gradient(ellipse_at_85%_50%,#251423_0%,#120c15_20%,#09090c_55%,#141016_100%)] pt-px">
      <svg className="absolute h-0 w-0">
        <defs>
          <linearGradient id="finder" x1="0" y1="0" x2="0" y2="1"><stop offset="0" stopColor="#39bdfb" /><stop offset="1" stopColor="#2563ef" /></linearGradient>
          <linearGradient id="mail" x1="0" y1="0" x2="0" y2="1"><stop offset="0" stopColor="#1d77ef" /><stop offset="1" stopColor="#2bc0fb" /></linearGradient>
          <linearGradient id="music" x1="0" y1="0" x2="0" y2="1"><stop offset="0" stopColor="#f94b66" /><stop offset="1" stopColor="#f3243d" /></linearGradient>
          <linearGradient id="fox" x1="1" y1="0" x2=".2" y2="1"><stop offset="0" stopColor="#ffd93c" /><stop offset=".5" stopColor="#ff7d22" /><stop offset="1" stopColor="#ea1263" /></linearGradient>
          <linearGradient id="bin" x1="0" y1="0" x2="1" y2="0"><stop offset="0" stopColor="#72777a" /><stop offset=".5" stopColor="#4b4f52" /><stop offset="1" stopColor="#878c8f" /></linearGradient>
        </defs>
      </svg>
      <div className="z-10 flex h-[57px] w-[1412px] items-start rounded-[16px] border border-[#47474b] bg-[#202125] pl-[2px] shadow-[0_0_40px_rgba(0,0,0,0.24)]">
        {apps.map((a, i) => <DockItem key={i} dot={a.dot}>{a.el}</DockItem>)}
        <span className="ml-[11px]" /><Divider /><span className="ml-[10px]" />
        <DockItem><Docker /></DockItem><DockItem><Docker /></DockItem><DockItem><KeePass /></DockItem>
        <span className="ml-[10px]" /><Divider /><span className="ml-[10px]" />
        <DockItem><Pictures /></DockItem><DockItem><Minimized /></DockItem><DockItem><Trash /></DockItem>
      </div>
    </div>
  );
}

export default function App() {
  return (
    <div className="flex h-[1080px] w-[1920px] flex-col overflow-hidden bg-[#0c0a0f]">
      <MenuBar />
      <div className="flex h-[994px] shrink-0 flex-col overflow-hidden rounded-[10px] border-t border-[#17181b] bg-[#323234]">
        <TabBar />
        <NavBar />
        <BookmarkBar />
        <div className="flex flex-1 items-start justify-center bg-[#caecf3] pt-[113px]">
          <Booking />
        </div>
      </div>
      <Dock />
    </div>
  );
}
